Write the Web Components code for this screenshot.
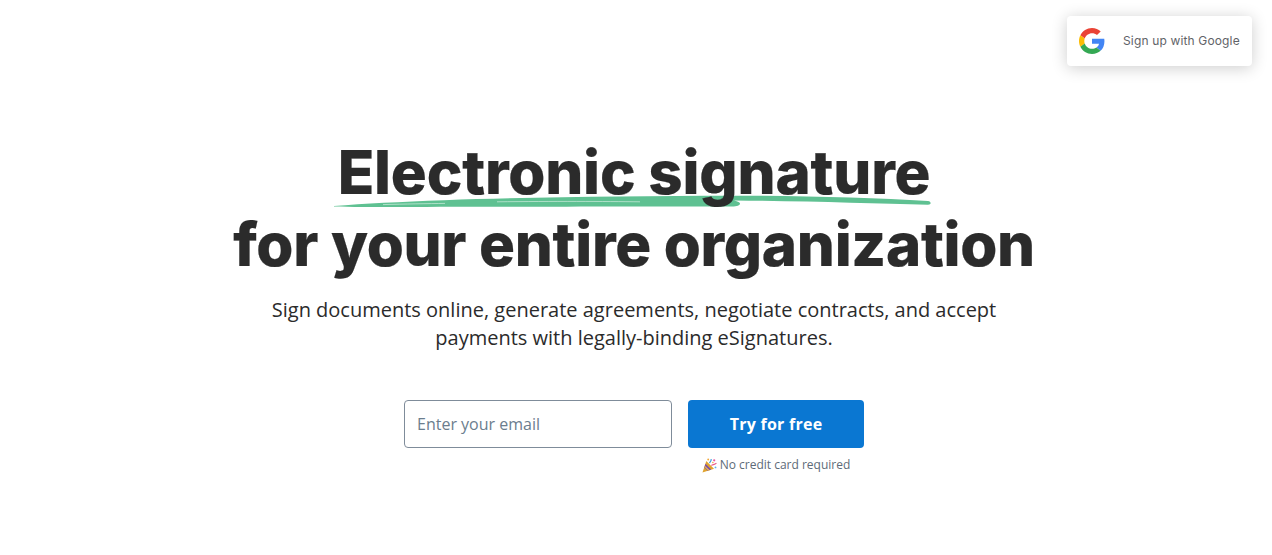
<!DOCTYPE html>
<html lang="en">
<head>
<meta charset="utf-8">
<title>Electronic signature</title>
<style>
  html, body { margin: 0; padding: 0; background: #fff; }
  body { width: 1272px; height: 555px; overflow: hidden; position: relative; font-family: "Open Sans", sans-serif; }
</style>
</head>
<body>
<google-signup>Sign up with Google</google-signup>
<hero-section>
  <span slot="headline">Electronic signature</span>
  <span slot="headline2">for your entire organization</span>
  <span slot="lead">Sign documents online, generate agreements, negotiate contracts, and accept<br>payments with legally-binding eSignatures.</span>
  <signup-form></signup-form>
</hero-section>

<script>
class GoogleSignup extends HTMLElement {
  constructor() {
    super();
    this.attachShadow({ mode: "open" });
    this.shadowRoot.innerHTML = `
      <style>
        :host {
          position: absolute;
          left: 1067px;
          top: 16px;
          width: 185px;
          height: 50px;
          box-sizing: border-box;
          display: flex;
          align-items: center;
          padding-left: 12px;
          background: #fff;
          border-radius: 4px;
          box-shadow: 0 2px 16px rgba(0, 0, 0, 0.2);
          font: 400 12px Inter, sans-serif;
          color: #5f6368;
          letter-spacing: 0.15px;
        }
        svg { width: 26px; height: 26px; margin-right: 18px; flex: none; }
        .label { margin-top: -1px; }
      </style>
      <svg viewBox="0 0 48 48">
        <path fill="#EA4335" d="M24 9.5c3.54 0 6.71 1.22 9.21 3.6l6.85-6.85C35.9 2.38 30.47 0 24 0 14.62 0 6.51 5.38 2.56 13.22l7.98 6.19C12.43 13.72 17.74 9.5 24 9.5z"/>
        <path fill="#4285F4" d="M46.98 24.55c0-1.57-.15-3.09-.38-4.55H24v9.02h12.94c-.58 2.96-2.26 5.48-4.78 7.18l7.73 6c4.51-4.18 7.09-10.36 7.09-17.65z"/>
        <path fill="#FBBC05" d="M10.53 28.59c-.48-1.45-.76-2.99-.76-4.59s.27-3.14.76-4.59l-7.98-6.19C.92 16.46 0 20.12 0 24c0 3.88.92 7.54 2.56 10.78l7.97-6.19z"/>
        <path fill="#34A853" d="M24 48c6.48 0 11.93-2.13 15.89-5.81l-7.73-6c-2.15 1.45-4.92 2.3-8.16 2.3-6.26 0-11.57-4.22-13.47-9.91l-7.98 6.19C6.51 42.62 14.62 48 24 48z"/>
      </svg>
      <span class="label"><slot></slot></span>
    `;
  }
}
customElements.define("google-signup", GoogleSignup);

class HeroSection extends HTMLElement {
  constructor() {
    super();
    this.attachShadow({ mode: "open" });
    this.shadowRoot.innerHTML = `
      <style>
        :host {
          display: flex;
          flex-direction: column;
          align-items: center;
          width: 1268px;
          padding-top: 136px;
          color: #2b2b2b;
        }
        h1 {
          margin: 0;
          font: 800 60px/72px Inter, sans-serif;
          letter-spacing: -0.3px;
          -webkit-text-stroke: 0.2px #2b2b2b;
          text-align: center;
          display: flex;
          flex-direction: column;
          align-items: center;
          isolation: isolate;
        }
        .mark { position: relative; display: block; letter-spacing: -0.2px; }
        .mark svg {
          position: absolute;
          left: -4px;
          top: 58px;
          width: 600px;
          height: 16px;
          z-index: -1;
        }
        p {
          margin: 16px 0 0;
          font: 400 20px/28px "Open Sans", sans-serif;
          color: #2b2b2b;
          text-align: center;
        }
        .form { margin-top: 48px; }
      </style>
      <h1>
        <span class="mark">
          <svg viewBox="0 0 600 16">
            <path fill="#5fc192" d="M0 12 C30 9.6 66 7.8 110 6.2 C200 3.2 300 1.8 400 1.7 C470 1.8 540 4 594 7 C597.5 7.4 597.5 10.8 594 10.8 C540 9.6 470 7 400 6.5 C404 7.4 406 8.4 406 9.6 C406 11.6 403 12.6 398 12.6 C300 12.6 166 12.8 66 13 C40 13 15 13 0 12.5 Z"/>
            <path fill="none" stroke="#fff" stroke-opacity=".7" stroke-width=".7" d="M163 7.8 C220 7.2 270 7.4 306 7.8 M49 10.6 C70 10 95 9.6 111 9.4"/>
          </svg>
          <slot name="headline"></slot>
        </span>
        <slot name="headline2"></slot>
      </h1>
      <p><slot name="lead"></slot></p>
      <div class="form"><slot></slot></div>
    `;
  }
}
customElements.define("hero-section", HeroSection);

class SignupForm extends HTMLElement {
  constructor() {
    super();
    this.attachShadow({ mode: "open" });
    this.shadowRoot.innerHTML = `
      <style>
        :host {
          display: grid;
          grid-template-columns: 268px 176px;
          column-gap: 16px;
          font-family: "Open Sans", sans-serif;
        }
        input {
          box-sizing: border-box;
          width: 268px;
          height: 48px;
          padding: 0 12px;
          border: 1px solid #7f8c9a;
          border-radius: 4px;
          font: 400 16px "Open Sans", sans-serif;
          color: #2b2b2b;
          outline: none;
        }
        input::placeholder { color: #6b7d8e; opacity: 1; }
        button {
          height: 48px;
          border: 0;
          border-radius: 4px;
          background: #0a77d2;
          color: #fff;
          font: 700 16px "Open Sans", sans-serif;
          letter-spacing: 0.25px;
          cursor: pointer;
        }
        .note {
          grid-column: 2;
          margin-top: 9px;
          display: flex;
          align-items: center;
          justify-content: center;
          gap: 3px;
          font-size: 12px;
          line-height: 16px;
          color: #5d6b78;
        }
        .note svg { width: 15px; height: 15px; flex: none; }
      </style>
      <input type="email" placeholder="Enter your email">
      <button type="button">Try for free</button>
      <div class="note">
        <svg viewBox="0 0 16 16">
          <path fill="#e0a32e" d="M.5 15.5 L4.6 3.2 L12.8 11.4 Z"/>
          <path fill="#7b4fa8" d="M2.4 10 L3.7 6 L9.9 12.2 L6 13.6 Z"/>
          <path fill="#f0c04a" d="M3 8.2 L8.2 13 L6.8 13.5 L2.6 9.4 Z"/>
          <path fill="none" stroke="#3f9fe0" stroke-width="1.2" d="M8 5.5 C8.6 3.6 10 3.6 9.8 1"/>
          <path fill="none" stroke="#e85a8a" stroke-width="1.2" d="M10 8 C11.6 6.8 13.4 7.4 15.4 5.4"/>
          <circle cx="13" cy="2.4" r="1.2" fill="#e85aa0"/>
          <circle cx="6.6" cy="1.6" r="1" fill="#f0a83c"/>
          <circle cx="14.4" cy="10" r="1" fill="#5ab4ea"/>
          <circle cx="11.6" cy="4.8" r=".8" fill="#f0a83c"/>
        </svg>
        <span>No credit card required</span>
      </div>
    `;
  }
}
customElements.define("signup-form", SignupForm);
</script>
</body>
</html>
